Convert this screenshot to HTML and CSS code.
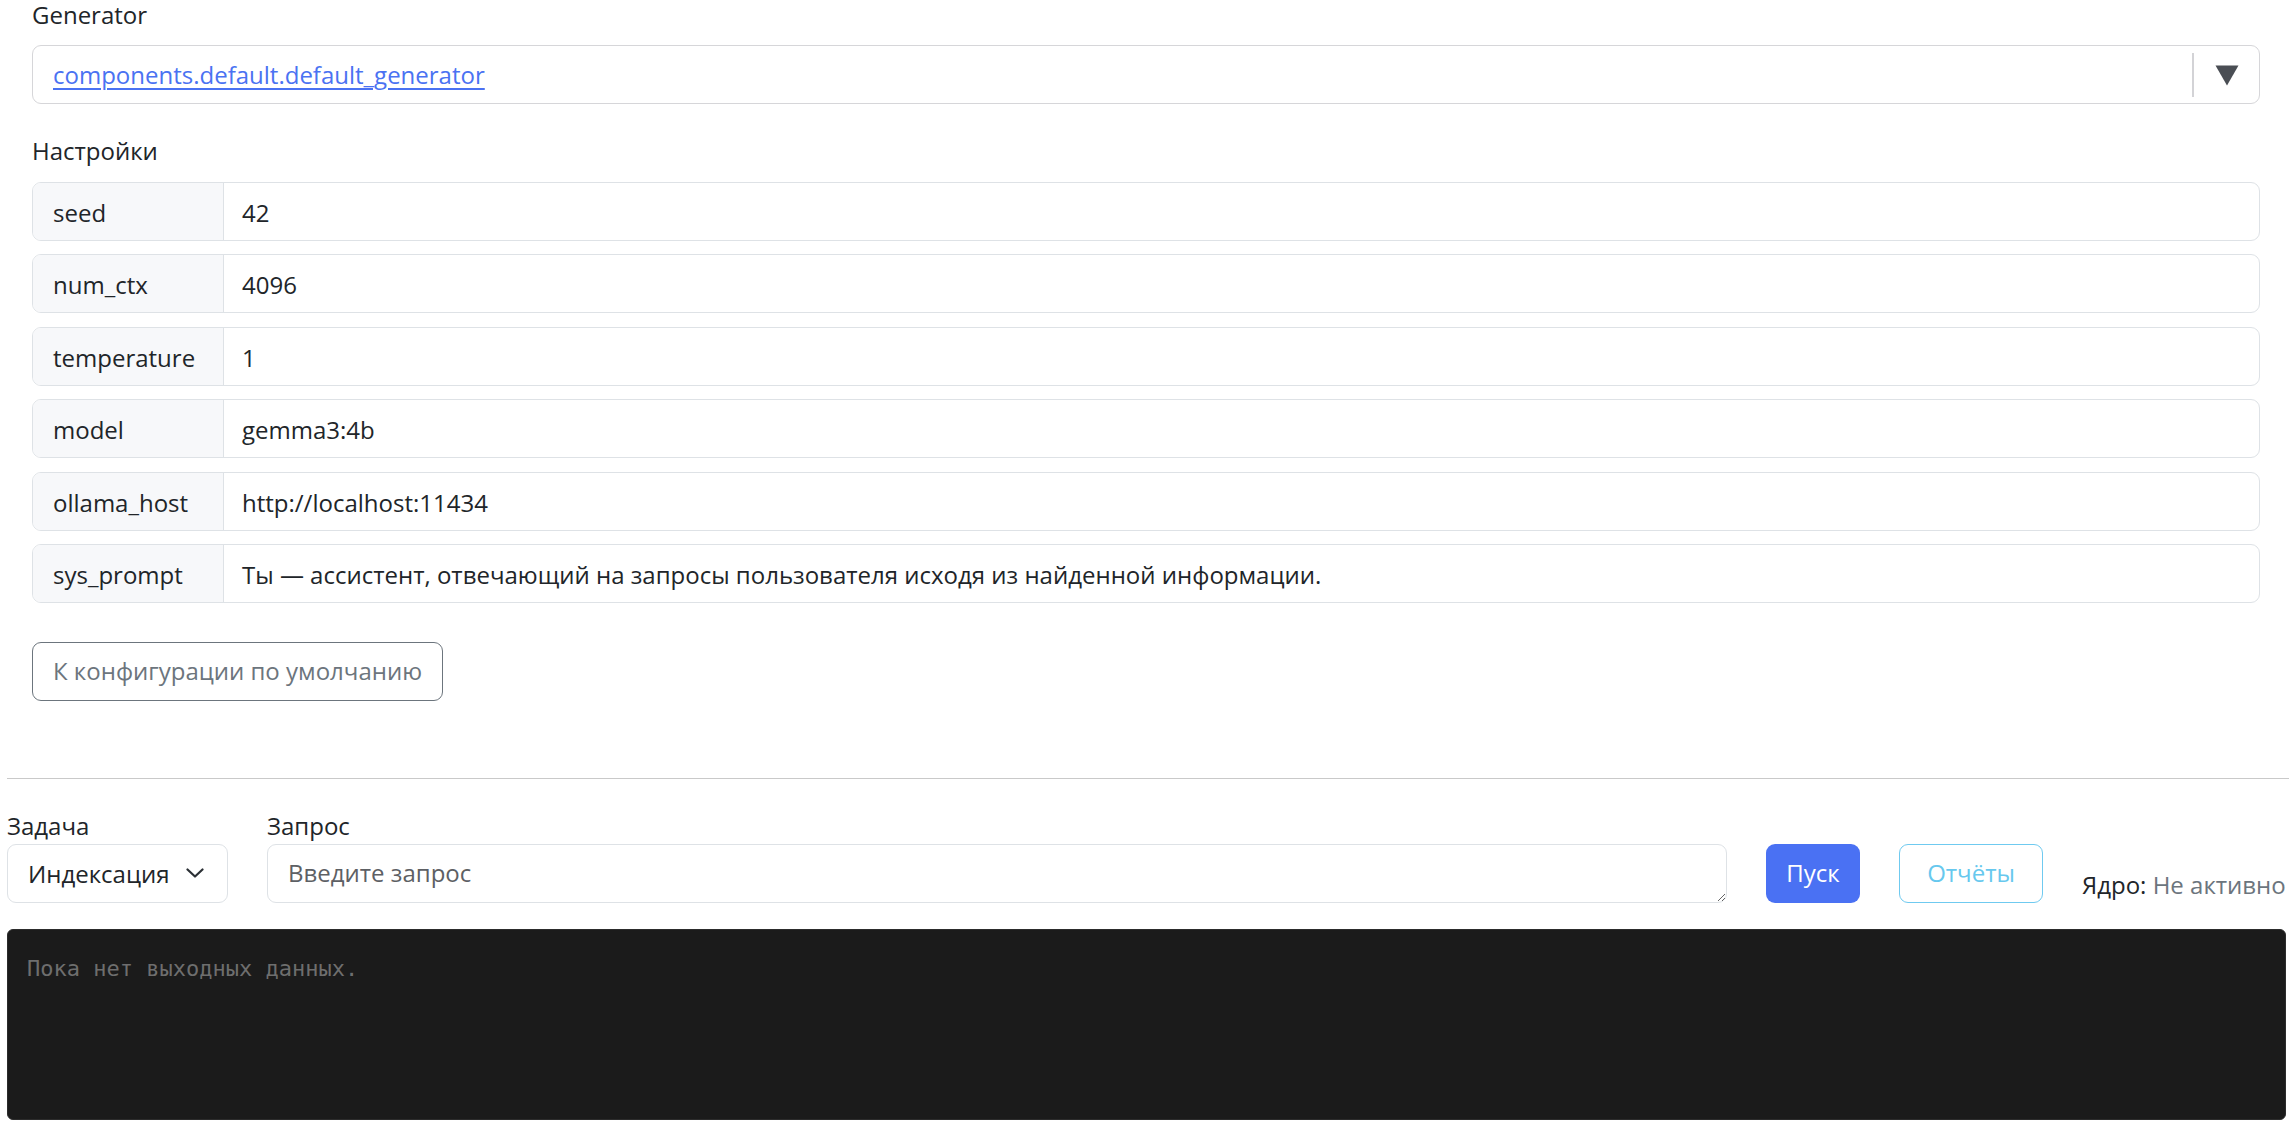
FILE: index.html
```html
<!DOCTYPE html>
<html lang="ru">
<head>
<meta charset="utf-8">
<title>Generator</title>
<link rel="stylesheet" href="styles.css">
</head>
<body>
<div class="page">
  <section class="config">
    <div class="field-label">Generator</div>
    <div class="dropdown">
      <a class="dd-value" href="#">components.default.default_generator</a>
      <span class="dd-sep"></span>
      <span class="dd-arrow"><svg width="24" height="21" viewBox="0 0 24 21"><polygon points="0.5,0.5 23.5,0.5 12,20.5" fill="#4a4e54"/></svg></span>
    </div>
    <div class="section-title">Настройки</div>
    <div class="params">
      <div class="param"><div class="param-key">seed</div><div class="param-val">42</div></div>
      <div class="param"><div class="param-key">num_ctx</div><div class="param-val">4096</div></div>
      <div class="param"><div class="param-key">temperature</div><div class="param-val">1</div></div>
      <div class="param"><div class="param-key">model</div><div class="param-val">gemma3:4b</div></div>
      <div class="param"><div class="param-key">ollama_host</div><div class="param-val">http://localhost:11434</div></div>
      <div class="param"><div class="param-key">sys_prompt</div><div class="param-val">Ты — ассистент, отвечающий на запросы пользователя исходя из найденной информации.</div></div>
    </div>
    <button class="btn-reset" type="button">К конфигурации по умолчанию</button>
  </section>

  <hr class="divider">

  <section class="runner">
    <div class="controls">
      <div class="ctl ctl-task">
        <label class="ctl-label">Задача</label>
        <div class="select">
          <span>Индексация</span>
          <svg class="chev" width="18" height="10" viewBox="0 0 18 10"><polyline points="1.5,1.5 9,8.5 16.5,1.5" fill="none" stroke="#2b3035" stroke-width="2.2" stroke-linecap="round" stroke-linejoin="round"/></svg>
        </div>
      </div>
      <div class="ctl ctl-query">
        <label class="ctl-label">Запрос</label>
        <textarea class="query" rows="1" placeholder="Введите запрос"></textarea>
      </div>
      <button class="btn-run" type="button">Пуск</button>
      <button class="btn-reports" type="button">Отчёты</button>
      <div class="status">Ядро: <span class="status-val">Не активно</span></div>
    </div>
    <div class="output">Пока нет выходных данных.</div>
  </section>
</div>
</body>
</html>
```
FILE: styles.css
```css
* { box-sizing: border-box; }

html, body {
  margin: 0;
  padding: 0;
  background: #ffffff;
}

body {
  font-family: "Open Sans", "Noto Sans", sans-serif;
  font-size: 24px;
  line-height: 36px;
  color: #212529;
  overflow: hidden;
}

.page {
  width: 2289px;
  height: 1124px;
}

/* ---------- config ---------- */
.config {
  padding: 0 29px 0 32px;
}

.field-label,
.section-title {
  line-height: 30px;
  height: 30px;
}

.field-label { margin-bottom: 15px; }

.dropdown {
  display: flex;
  align-items: center;
  height: 59px;
  border: 1px solid #d6d6d9;
  border-radius: 9px;
  padding-left: 20px;
}

.dd-value {
  flex: 1;
  color: #4a72f2;
  text-decoration: underline;
  text-underline-offset: 4px;
  text-decoration-thickness: 1.5px;
}

.dd-sep {
  width: 2px;
  height: 44px;
  background: #d3d3d6;
}

.dd-arrow {
  display: flex;
  align-items: center;
  justify-content: center;
  width: 65px;
  padding-top: 1px;
}

.section-title {
  margin-top: 32px;
  margin-bottom: 16px;
}

.params {
  display: flex;
  flex-direction: column;
  gap: 13.4px;
}

.param {
  display: flex;
  height: 59px;
  border: 1px solid #dee2e6;
  border-radius: 9px;
  overflow: hidden;
}

.param-key {
  width: 191px;
  flex: none;
  display: flex;
  align-items: center;
  padding: 3px 0 0 20px;
  background: #f7f8fa;
  border-right: 1px solid #dee2e6;
}

.param-val {
  flex: 1;
  display: flex;
  align-items: center;
  padding: 3px 0 0 18px;
  white-space: nowrap;
}

.btn-reset {
  margin-top: 39px;
  height: 59px;
  padding: 0 20px;
  font: inherit;
  line-height: 36px;
  color: #6c757d;
  background: #ffffff;
  border: 1px solid #6c757d;
  border-radius: 9px;
}

/* ---------- divider ---------- */
.divider {
  margin: 77px 0 0 7px;
  border: 0;
  border-top: 1px solid #c9c9c9;
  height: 0;
}

/* ---------- runner ---------- */
.runner {
  padding: 0 3px 0 7px;
}

.controls {
  margin-top: 32px;
  display: flex;
  align-items: flex-end;
  gap: 39px;
  white-space: nowrap;
}

.ctl {
  display: flex;
  flex-direction: column;
}

.ctl-label {
  line-height: 30px;
  height: 30px;
  margin-bottom: 3px;
}

.ctl-task { width: 221px; }
.ctl-query { width: 1460px; }

.select {
  display: flex;
  align-items: center;
  justify-content: space-between;
  height: 59px;
  padding: 2px 23px 0 20px;
  border: 1px solid #dee2e6;
  border-radius: 9px;
}

.chev { margin-top: -2px; }

.query {
  display: block;
  width: 100%;
  height: 59px;
  padding: 10px 20px;
  font: inherit;
  line-height: 36px;
  color: #212529;
  border: 1px solid #dee2e6;
  border-radius: 9px;
  resize: vertical;
  outline: none;
}

.query::placeholder { color: #5d6064; }

.btn-run {
  width: 94px;
  height: 59px;
  font: inherit;
  line-height: 36px;
  color: #ffffff;
  background: #4a71f3;
  border: 0;
  border-radius: 9px;
  padding: 0;
}

.btn-reports {
  width: 144px;
  height: 59px;
  font: inherit;
  line-height: 36px;
  color: #67c8ee;
  background: #ffffff;
  border: 1px solid #6fcaf0;
  border-radius: 9px;
  padding: 0;
}

.status {
  line-height: 36px;
  color: #212529;
}

.status-val { color: #6c757d; }

.output {
  margin-top: 26px;
  height: 191px;
  padding: 22px 19px;
  background: #1b1b1b;
  border: 1px solid #2c2c2c;
  border-radius: 6px;
  font-family: "DejaVu Sans Mono", monospace;
  font-size: 22px;
  line-height: 33px;
  color: #6e6e6e;
}
```
